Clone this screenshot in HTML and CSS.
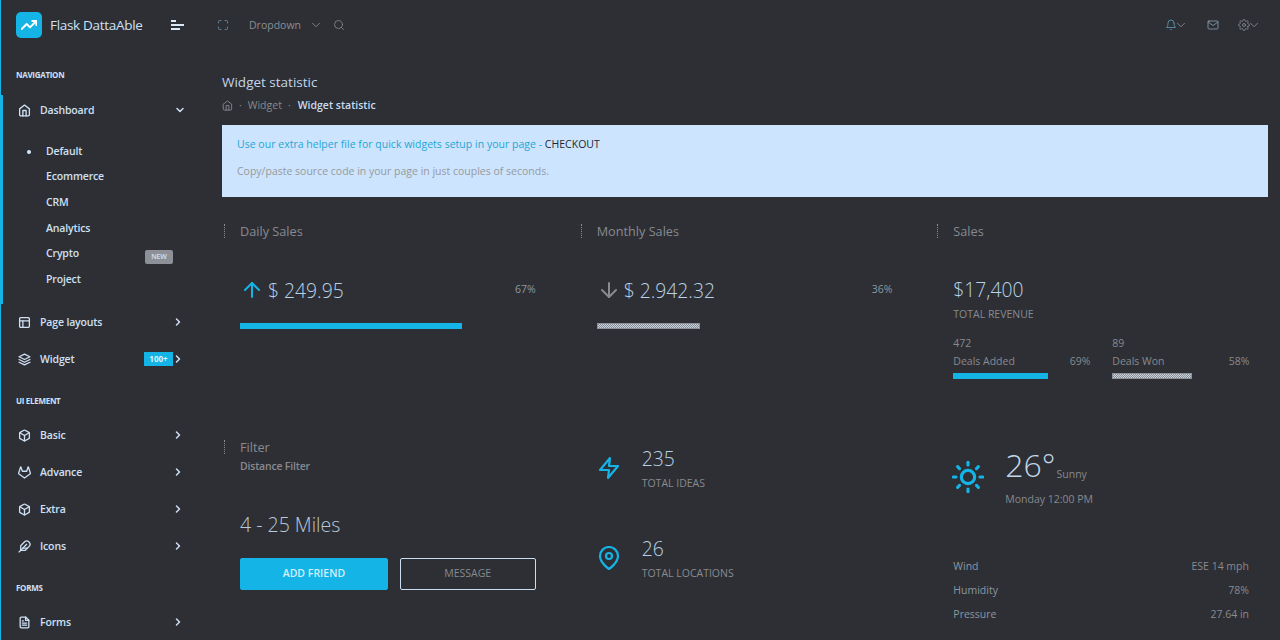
FILE: index.html
```html
<!DOCTYPE html>
<html lang="en">
<head>
    <meta charset="UTF-8">
    <meta name="viewport" content="width=device-width, initial-scale=1.0">
    <title>Widget statistic</title>
    <link rel="stylesheet" href="styles.css">
</head>
<body>
    <svg class="sprite" xmlns="http://www.w3.org/2000/svg">
        <symbol id="i-home" viewBox="0 0 24 24"><path d="M3 9l9-7 9 7v11a2 2 0 0 1-2 2H5a2 2 0 0 1-2-2z"/><polyline points="9 22 9 12 15 12 15 22"/></symbol>
        <symbol id="i-layout" viewBox="0 0 24 24"><rect x="3" y="3" width="18" height="18" rx="2"/><line x1="3" y1="9" x2="21" y2="9"/><line x1="9" y1="21" x2="9" y2="9"/></symbol>
        <symbol id="i-layers" viewBox="0 0 24 24"><polygon points="12 2 2 7 12 12 22 7 12 2"/><polyline points="2 17 12 22 22 17"/><polyline points="2 12 12 17 22 12"/></symbol>
        <symbol id="i-box" viewBox="0 0 24 24"><path d="M21 16V8a2 2 0 0 0-1-1.73l-7-4a2 2 0 0 0-2 0l-7 4A2 2 0 0 0 3 8v8a2 2 0 0 0 1 1.73l7 4a2 2 0 0 0 2 0l7-4A2 2 0 0 0 21 16z"/><polyline points="3.27 6.96 12 12.01 20.73 6.96"/><line x1="12" y1="22.08" x2="12" y2="12"/></symbol>
        <symbol id="i-gitlab" viewBox="0 0 24 24"><path d="M22.65 14.39L12 22.13 1.35 14.39a.84.84 0 0 1-.3-.94l1.22-3.78 2.44-7.51A.42.42 0 0 1 4.82 2a.43.43 0 0 1 .58 0 .42.42 0 0 1 .11.18l2.44 7.49h8.1l2.44-7.51A.42.42 0 0 1 18.6 2a.43.43 0 0 1 .58 0 .42.42 0 0 1 .11.18l2.44 7.51L23 13.45a.84.84 0 0 1-.35.94z"/></symbol>
        <symbol id="i-feather" viewBox="0 0 24 24"><path d="M20.24 12.24a6 6 0 0 0-8.49-8.49L5 10.5V19h8.5z"/><line x1="16" y1="8" x2="2" y2="22"/><line x1="17.5" y1="15" x2="9" y2="15"/></symbol>
        <symbol id="i-file" viewBox="0 0 24 24"><path d="M14 2H6a2 2 0 0 0-2 2v16a2 2 0 0 0 2 2h12a2 2 0 0 0 2-2V8z"/><polyline points="14 2 14 8 20 8"/><line x1="16" y1="13" x2="8" y2="13"/><line x1="16" y1="17" x2="8" y2="17"/><polyline points="10 9 9 9 8 9"/></symbol>
        <symbol id="i-max" viewBox="0 0 24 24"><path d="M8 3H5a2 2 0 0 0-2 2v3m18 0V5a2 2 0 0 0-2-2h-3m0 18h3a2 2 0 0 0 2-2v-3M3 16v3a2 2 0 0 0 2 2h3"/></symbol>
        <symbol id="i-search" viewBox="0 0 24 24"><circle cx="11" cy="11" r="8"/><line x1="21" y1="21" x2="16.65" y2="16.65"/></symbol>
        <symbol id="i-down" viewBox="0 0 24 24"><polyline points="6 9 12 15 18 9"/></symbol>
        <symbol id="i-right" viewBox="0 0 24 24"><polyline points="9 18 15 12 9 6"/></symbol>
        <symbol id="i-bell" viewBox="0 0 24 24"><path d="M18 8A6 6 0 0 0 6 8c0 7-3 9-3 9h18s-3-2-3-9"/><path d="M13.73 21a2 2 0 0 1-3.46 0"/></symbol>
        <symbol id="i-mail" viewBox="0 0 24 24"><path d="M4 4h16c1.1 0 2 .9 2 2v12c0 1.1-.9 2-2 2H4c-1.1 0-2-.9-2-2V6c0-1.1.9-2 2-2z"/><polyline points="22,6 12,13 2,6"/></symbol>
        <symbol id="i-settings" viewBox="0 0 24 24"><circle cx="12" cy="12" r="3"/><path d="M19.4 15a1.65 1.65 0 0 0 .33 1.82l.06.06a2 2 0 0 1 0 2.83 2 2 0 0 1-2.83 0l-.06-.06a1.65 1.65 0 0 0-1.82-.33 1.65 1.65 0 0 0-1 1.51V21a2 2 0 0 1-2 2 2 2 0 0 1-2-2v-.09A1.65 1.65 0 0 0 9 19.4a1.65 1.65 0 0 0-1.82.33l-.06.06a2 2 0 0 1-2.83 0 2 2 0 0 1 0-2.83l.06-.06a1.65 1.65 0 0 0 .33-1.82 1.65 1.65 0 0 0-1.51-1H3a2 2 0 0 1-2-2 2 2 0 0 1 2-2h.09A1.65 1.65 0 0 0 4.6 9a1.65 1.65 0 0 0-.33-1.82l-.06-.06a2 2 0 0 1 0-2.83 2 2 0 0 1 2.83 0l.06.06a1.65 1.65 0 0 0 1.82.33H9a1.65 1.65 0 0 0 1-1.51V3a2 2 0 0 1 2-2 2 2 0 0 1 2 2v.09a1.65 1.65 0 0 0 1 1.51 1.65 1.65 0 0 0 1.82-.33l.06-.06a2 2 0 0 1 2.83 0 2 2 0 0 1 0 2.83l-.06.06a1.65 1.65 0 0 0-.33 1.82V9a1.65 1.65 0 0 0 1.51 1H21a2 2 0 0 1 2 2 2 2 0 0 1-2 2h-.09a1.65 1.65 0 0 0-1.51 1z"/></symbol>
        <symbol id="i-zap" viewBox="0 0 24 24"><polygon points="13 2 3 14 12 14 11 22 21 10 12 10 13 2"/></symbol>
        <symbol id="i-pin" viewBox="0 0 24 24"><path d="M21 10c0 7-9 13-9 13s-9-6-9-13a9 9 0 0 1 18 0z"/><circle cx="12" cy="10" r="3"/></symbol>
        <symbol id="i-sun" viewBox="0 0 24 24"><circle cx="12" cy="12" r="5"/><line x1="12" y1="1" x2="12" y2="3"/><line x1="12" y1="21" x2="12" y2="23"/><line x1="4.22" y1="4.22" x2="5.64" y2="5.64"/><line x1="18.36" y1="18.36" x2="19.78" y2="19.78"/><line x1="1" y1="12" x2="3" y2="12"/><line x1="21" y1="12" x2="23" y2="12"/><line x1="4.22" y1="19.78" x2="5.64" y2="18.36"/><line x1="18.36" y1="5.64" x2="19.78" y2="4.22"/></symbol>
        <symbol id="i-arrow-up" viewBox="0 0 24 24"><line x1="12" y1="19" x2="12" y2="5"/><polyline points="5 12 12 5 19 12"/></symbol>
        <symbol id="i-arrow-down" viewBox="0 0 24 24"><line x1="12" y1="5" x2="12" y2="19"/><polyline points="19 12 12 19 5 12"/></symbol>
        <symbol id="i-trend" viewBox="0 0 24 24"><polyline points="23 6 13.5 15.5 8.5 10.5 1 18"/><polyline points="17 6 23 6 23 12"/></symbol>
    </svg>

    <div class="app">
        <aside class="sidebar">
            <div class="brand">
                <span class="brand-logo"><svg class="icon"><use href="#i-trend"/></svg></span>
                <span class="brand-name">Flask DattaAble</span>
                <span class="toggler"><i></i><i></i><i></i></span>
            </div>
            <nav class="nav">
                <div class="nav-caption caption-first">NAVIGATION</div>
                <div class="nav-group">
                    <a class="nav-item"><svg class="icon"><use href="#i-home"/></svg><span class="nav-label">Dashboard</span><svg class="icon chev"><use href="#i-down"/></svg></a>
                    <ul class="submenu">
                        <li class="current">Default</li>
                        <li>Ecommerce</li>
                        <li>CRM</li>
                        <li>Analytics</li>
                        <li>Crypto<span class="tag-new">NEW</span></li>
                        <li>Project</li>
                    </ul>
                </div>
                <a class="nav-item"><svg class="icon"><use href="#i-layout"/></svg><span class="nav-label">Page layouts</span><svg class="icon chev"><use href="#i-right"/></svg></a>
                <a class="nav-item"><svg class="icon"><use href="#i-layers"/></svg><span class="nav-label">Widget</span><span class="tag-count">100+</span><svg class="icon chev"><use href="#i-right"/></svg></a>
                <div class="nav-caption">UI ELEMENT</div>
                <a class="nav-item"><svg class="icon"><use href="#i-box"/></svg><span class="nav-label">Basic</span><svg class="icon chev"><use href="#i-right"/></svg></a>
                <a class="nav-item"><svg class="icon"><use href="#i-gitlab"/></svg><span class="nav-label">Advance</span><svg class="icon chev"><use href="#i-right"/></svg></a>
                <a class="nav-item"><svg class="icon"><use href="#i-box"/></svg><span class="nav-label">Extra</span><svg class="icon chev"><use href="#i-right"/></svg></a>
                <a class="nav-item"><svg class="icon"><use href="#i-feather"/></svg><span class="nav-label">Icons</span><svg class="icon chev"><use href="#i-right"/></svg></a>
                <div class="nav-caption">FORMS</div>
                <a class="nav-item"><svg class="icon"><use href="#i-file"/></svg><span class="nav-label">Forms</span><svg class="icon chev"><use href="#i-right"/></svg></a>
            </nav>
        </aside>

        <div class="main">
            <header class="topbar">
                <div class="topbar-left">
                    <svg class="icon top-max"><use href="#i-max"/></svg>
                    <span class="top-link">Dropdown</span>
                    <svg class="icon top-chev"><use href="#i-down"/></svg>
                    <svg class="icon top-search"><use href="#i-search"/></svg>
                </div>
                <div class="topbar-right">
                    <span class="top-action"><svg class="icon bell"><use href="#i-bell"/></svg><svg class="icon top-chev"><use href="#i-down"/></svg></span>
                    <svg class="icon mail"><use href="#i-mail"/></svg>
                    <span class="top-action"><svg class="icon gear"><use href="#i-settings"/></svg><svg class="icon top-chev"><use href="#i-down"/></svg></span>
                </div>
            </header>

            <main class="content">
                <h1 class="page-title">Widget statistic</h1>
                <div class="breadcrumb">
                    <svg class="icon"><use href="#i-home"/></svg>
                    <span class="sep">·</span>
                    <span>Widget</span>
                    <span class="sep">·</span>
                    <span class="crumb-active">Widget statistic</span>
                </div>

                <div class="alert">
                    <p class="alert-title">Use our extra helper file for quick widgets setup in your page - <b>CHECKOUT</b></p>
                    <p class="alert-text">Copy/paste source code in your page in just couples of seconds.</p>
                </div>

                <div class="grid">
                    <section class="card">
                        <h5 class="card-title">Daily Sales</h5>
                        <div class="stat-row">
                            <div class="stat-value"><svg class="icon up"><use href="#i-arrow-up"/></svg>$ 249.95</div>
                            <span class="stat-pct">67%</span>
                        </div>
                        <div class="bar"><div class="fill" style="width: 75%"></div></div>
                    </section>

                    <section class="card">
                        <h5 class="card-title">Monthly Sales</h5>
                        <div class="stat-row">
                            <div class="stat-value"><svg class="icon dn"><use href="#i-arrow-down"/></svg>$ 2.942.32</div>
                            <span class="stat-pct">36%</span>
                        </div>
                        <div class="bar"><div class="fill fill-grey" style="width: 35%"></div></div>
                    </section>

                    <section class="card">
                        <h5 class="card-title">Sales</h5>
                        <div class="revenue">$17,400</div>
                        <div class="revenue-label">TOTAL REVENUE</div>
                        <div class="deals">
                            <div>
                                <div class="deal-num">472</div>
                                <div class="deal-row"><span>Deals Added</span><span>69%</span></div>
                                <div class="bar"><div class="fill" style="width: 69%"></div></div>
                            </div>
                            <div>
                                <div class="deal-num">89</div>
                                <div class="deal-row"><span>Deals Won</span><span>58%</span></div>
                                <div class="bar"><div class="fill fill-grey" style="width: 58%"></div></div>
                            </div>
                        </div>
                    </section>

                    <section class="card">
                        <h5 class="card-title">Filter</h5>
                        <div class="filter-sub">Distance Filter</div>
                        <div class="miles">4 - 25 Miles</div>
                        <div class="actions">
                            <button class="btn btn-primary">ADD FRIEND</button>
                            <button class="btn btn-outline">MESSAGE</button>
                        </div>
                    </section>

                    <section class="card card-totals">
                        <div class="total">
                            <svg class="icon total-icon"><use href="#i-zap"/></svg>
                            <div>
                                <div class="total-num">235</div>
                                <div class="total-label">TOTAL IDEAS</div>
                            </div>
                        </div>
                        <div class="total">
                            <svg class="icon total-icon"><use href="#i-pin"/></svg>
                            <div>
                                <div class="total-num">26</div>
                                <div class="total-label">TOTAL LOCATIONS</div>
                            </div>
                        </div>
                    </section>

                    <section class="card card-weather">
                        <div class="weather">
                            <svg class="icon sun"><use href="#i-sun"/></svg>
                            <div>
                                <div class="temp">26°<span>Sunny</span></div>
                                <div class="weather-date">Monday 12:00 PM</div>
                            </div>
                        </div>
                        <dl class="weather-list">
                            <div><dt>Wind</dt><dd>ESE 14 mph</dd></div>
                            <div><dt>Humidity</dt><dd>78%</dd></div>
                            <div><dt>Pressure</dt><dd>27.64 in</dd></div>
                        </dl>
                    </section>
                </div>
            </main>
        </div>
    </div>
</body>
</html>
```

FILE: styles.css
```css
* {
    box-sizing: border-box;
}

body {
    margin: 0;
    height: 640px;
    overflow: hidden;
    background-color: #2d2f34;
    color: #888a90;
    font-family: "Open Sans", sans-serif;
    font-size: 10.5px;
}

.sprite {
    display: none;
}

.icon {
    display: block;
    width: 14px;
    height: 14px;
    fill: none;
    stroke: currentColor;
    stroke-width: 2;
    stroke-linecap: round;
    stroke-linejoin: round;
    flex: none;
}

.app {
    display: flex;
    height: 640px;
}

/* sidebar */
.sidebar {
    width: 200px;
    flex: none;
    border-left: 1px solid #14b4e6;
    color: #cfe0f5;
}

.brand {
    display: flex;
    align-items: center;
    height: 50px;
    padding-left: 15px;
}

.brand-logo {
    display: flex;
    align-items: center;
    justify-content: center;
    width: 26px;
    height: 26px;
    border-radius: 5px;
    background-color: #14b4e6;
    color: #fff;
}

.brand-logo .icon {
    width: 16px;
    height: 16px;
    stroke-width: 3;
}

.brand-name {
    width: 93px;
    margin-left: 8px;
    font-size: 13.5px;
    letter-spacing: -0.3px;
    white-space: nowrap;
}

.toggler {
    display: flex;
    flex-direction: column;
    gap: 2px;
    margin-left: 28px;
}

.toggler i {
    display: block;
    width: 13px;
    height: 2px;
    background-color: #dbe8f8;
}

.toggler i:first-child {
    width: 5px;
}

.toggler i:last-child {
    width: 9px;
}

.nav-caption {
    height: 39px;
    padding: 17px 0 0 15px;
    font-size: 8px;
    font-weight: 700;
    letter-spacing: -0.3px;
    line-height: 11px;
}

.caption-first {
    height: 45px;
    padding-top: 19px;
}

.nav-group {
    margin-left: -1px;
    border-left: 3px solid #14b4e6;
    padding-bottom: 12px;
}

.nav-group .nav-item {
    height: 30px;
    padding-left: 15px;
    padding-right: 14px;
}

.nav-item {
    display: flex;
    align-items: center;
    height: 37px;
    padding-left: 17px;
    padding-right: 16px;
    font-size: 10.5px;
    font-weight: 600;
    letter-spacing: -0.15px;
}

.nav-item .icon {
    width: 13px;
    height: 13px;
    stroke-width: 2.4;
}

.nav-label {
    margin-left: 9px;
    flex: 1;
}

.nav-item .chev {
    width: 12px;
    height: 12px;
    stroke-width: 3;
}

.submenu {
    list-style: none;
    margin: 13px 0 0;
    padding: 0;
}

.submenu li {
    display: flex;
    align-items: center;
    position: relative;
    height: 25.6px;
    padding-left: 43px;
    font-weight: 600;
    letter-spacing: -0.15px;
}

.submenu .current::before {
    content: "";
    position: absolute;
    left: 24px;
    top: 12px;
    width: 4px;
    height: 4px;
    border-radius: 50%;
    background-color: #dbe8f8;
}

.tag-new {
    position: relative;
    top: 4px;
    width: 28px;
    height: 14px;
    margin-left: 66px;
    border-radius: 2px;
    background-color: #8d9097;
    font-size: 7px;
    line-height: 14px;
    text-align: center;
}

.tag-count {
    width: 29px;
    height: 14px;
    margin-right: -1px;
    background-color: #14b4e6;
    color: #dff2fb;
    font-size: 8px;
    font-weight: 700;
    letter-spacing: 0;
    line-height: 14px;
    text-align: center;
}

/* topbar */
.main {
    flex: 1;
    min-width: 0;
}

.topbar {
    display: flex;
    align-items: center;
    justify-content: space-between;
    height: 50px;
    padding: 0 19px 0 17px;
}

.topbar-left,
.topbar-right,
.top-action {
    display: flex;
    align-items: center;
}

.top-max,
.top-search,
.bell,
.mail,
.gear {
    width: 12px;
    height: 12px;
    stroke-width: 1.6;
}

.top-max {
    color: #6f97ad;
}

.top-link {
    margin-left: 20px;
    color: #888e96;
}

.top-chev {
    width: 14px;
    height: 14px;
    stroke-width: 1.5;
    color: #8a8c92;
}

.top-action .top-chev {
    margin-left: -3px;
}

.topbar-left .top-chev {
    margin-left: 8px;
}

.top-search {
    margin-left: 10px;
    color: #8a8c92;
}

.bell {
    color: #5f9fbc;
}

.mail {
    margin: 0 19px;
    color: #8aa2b5;
}

.gear {
    color: #8a9299;
}

/* content */
.content {
    padding: 14px 12px 0 22px;
}

.page-title {
    margin: 0;
    font-size: 13.5px;
    font-weight: 400;
    line-height: 36px;
    color: #c3d5e8;
}

.breadcrumb {
    display: flex;
    align-items: center;
    gap: 6px;
    height: 14px;
    margin-top: -2px;
    color: #888a90;
}

.breadcrumb .icon {
    width: 11px;
    height: 11px;
    stroke-width: 2;
}

.crumb-active {
    margin-left: 1px;
    font-weight: 600;
    color: #c9dcf0;
}

.alert {
    height: 72px;
    margin-top: 13px;
    padding: 12px 15px;
    background-color: #cce4fd;
}

.alert p {
    margin: 0;
    line-height: 14px;
}

.alert-title {
    color: #1fa6d6;
    letter-spacing: 0.02px;
}

.alert-title b {
    font-weight: 400;
    color: #1d2833;
}

.alert .alert-text {
    margin-top: 13px;
    color: #97999e;
}

.grid {
    display: grid;
    grid-template-columns: repeat(3, 331.67px);
    grid-template-rows: 216px 216px;
    column-gap: 25px;
    margin-top: 27px;
}

.card {
    padding: 0 18px;
    min-width: 0;
}

.card-title {
    height: 14px;
    margin: 0 0 0 -16px;
    padding-left: 15px;
    border-left: 1px dotted #8a8c92;
    font-size: 12.7px;
    font-weight: 400;
    line-height: 14px;
    color: #888a90;
}

.stat-row {
    display: flex;
    align-items: center;
    justify-content: space-between;
    height: 28px;
    margin-top: 38px;
}

.stat-value {
    display: flex;
    align-items: center;
    gap: 4px;
    font-size: 19.3px;
    font-weight: 300;
    color: #b9d2e8;
}

.stat-value .icon {
    width: 24px;
    height: 24px;
}

.up {
    color: #14b4e6;
}

.stat-value .dn {
    margin-right: -1px;
    color: #888a90;
}

.stat-pct {
    margin-bottom: 3px;
    color: #8a9aa5;
}

.bar {
    height: 6px;
}

.stat-row + .bar {
    margin-top: 19px;
}

.fill {
    height: 100%;
    background-color: #14b4e6;
}

.fill-grey {
    border: 1px solid #8d9097;
    background-color: #8d9097;
    background-image: conic-gradient(#c4d0dc 25%, transparent 0 50%, #c4d0dc 0 75%, transparent 0);
    background-size: 2px 2px;
}

.revenue {
    height: 26px;
    margin-top: 39px;
    font-size: 19.3px;
    font-weight: 300;
    line-height: 26px;
    color: #b9d2e8;
}

.revenue-label {
    margin-top: 4px;
    line-height: 14px;
}

.deals {
    display: grid;
    grid-template-columns: 137px 137px;
    column-gap: 22px;
    margin-top: 15px;
}

.deal-num {
    line-height: 14px;
}

.deal-row {
    display: flex;
    justify-content: space-between;
    margin-top: 4px;
    line-height: 14px;
}

.deal-row + .bar {
    margin-top: 5px;
}

.filter-sub {
    margin-top: 5px;
    font-weight: 600;
    letter-spacing: -0.2px;
    line-height: 14px;
}

.miles {
    margin-top: 39px;
    font-size: 19.5px;
    font-weight: 300;
    line-height: 26px;
    color: #b9c9d9;
}

.actions {
    display: flex;
    gap: 12px;
    margin-top: 20px;
}

.btn {
    height: 32px;
    padding: 0 0 2px;
    border-radius: 2px;
    font-family: inherit;
    font-size: 10.5px;
}

.btn-primary {
    width: 148px;
    border: 1px solid #14b4e6;
    background-color: #14b4e6;
    color: #d4eefb;
    font-weight: 600;
}

.btn-outline {
    width: 136px;
    border: 1px solid #c9dcf0;
    background-color: transparent;
    color: #888a90;
}

.card-totals {
    padding-top: 6px;
}

.total {
    display: flex;
    height: 90px;
}

.total-icon {
    width: 24px;
    height: 24px;
    margin-top: 10px;
    stroke-width: 2.2;
    color: #14b4e6;
}

.total > div {
    margin-left: 21px;
}

.total-num {
    font-size: 19.3px;
    font-weight: 300;
    line-height: 26px;
    color: #b9d2e8;
}

.total-label {
    margin-top: 4px;
    line-height: 14px;
}

.weather {
    display: flex;
    padding-top: 7px;
}

.sun {
    width: 32px;
    height: 32px;
    margin: 14px 0 0 -1px;
    stroke-width: 2.4;
    color: #14b4e6;
}

.weather > div {
    margin-left: 21px;
}

.temp {
    font-size: 32px;
    font-weight: 300;
    line-height: 35px;
    color: #c3d5e8;
}

.temp span {
    margin-left: 1px;
    font-size: 10.5px;
    font-weight: 400;
    vertical-align: -1px;
    color: #888a90;
}

.weather-date {
    line-height: 14px;
}

.weather-list {
    margin: 53px 0 0;
}

.weather-list div {
    display: flex;
    justify-content: space-between;
    height: 24px;
    line-height: 14px;
}

.weather-list dt {
    font-weight: 500;
    color: #8a98a3;
}

.weather-list dd {
    margin: 0;
}
```
